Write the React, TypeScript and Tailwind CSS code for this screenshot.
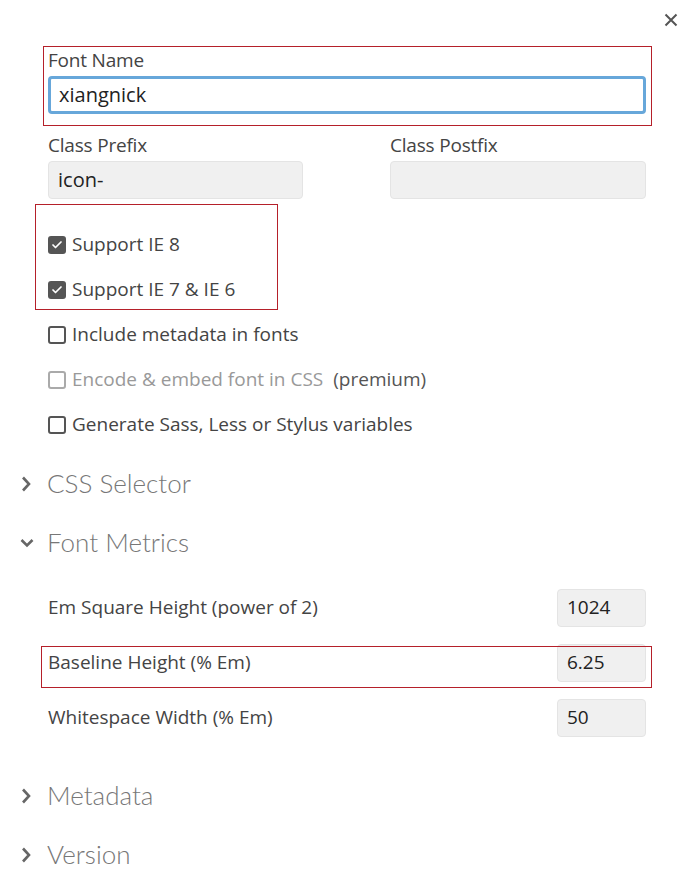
import { Check } from 'lucide-react';

const checks = [
  { label: 'Support IE 8', checked: true },
  { label: 'Support IE 7 & IE 6', checked: true },
];

const metrics = [
  { label: 'Em Square Height (power of 2)', value: '1024' },
  { label: 'Baseline Height (% Em)', value: '6.25', marked: true },
  { label: 'Whitespace Width (% Em)', value: '50' },
];

function Box({ checked, disabled }: { checked?: boolean; disabled?: boolean }) {
  if (checked) {
    return (
      <span className="w-[18px] h-[18px] rounded-[3px] bg-[#555] flex items-center justify-center shrink-0">
        <Check className="w-[12px] h-[12px] text-white" strokeWidth={3.5} />
      </span>
    );
  }
  return (
    <span
      className={
        disabled
          ? 'w-[18px] h-[18px] rounded-[3px] border-2 border-[#aaa] shrink-0'
          : 'w-[18px] h-[18px] rounded-[3px] border-2 border-[#555] shrink-0'
      }
    />
  );
}

function Section({ title, open }: { title: string; open?: boolean }) {
  return (
    <div className="h-[59px] flex items-center text-[#777] text-[26px] font-light" style={{ fontFamily: 'Lato, sans-serif' }}>
      <div className="w-[47px] flex items-center">
        {open ? (
          <svg width="14" height="10" viewBox="0 0 14 10" className="ml-[20px]">
            <path d="M1.5 2L7 7.5L12.5 2" fill="none" stroke="#666" strokeWidth="2.6" />
          </svg>
        ) : (
          <svg width="10" height="16" viewBox="0 0 10 16" className="ml-[21px]">
            <path d="M2 1.5L8 8L2 14.5" fill="none" stroke="#666" strokeWidth="2.6" />
          </svg>
        )}
      </div>
      <span>{title}</span>
    </div>
  );
}

export default function App() {
  return (
    <div
      className="w-[686px] h-[875px] bg-white relative overflow-hidden text-[#444]"
      style={{ fontFamily: '"Open Sans", "Noto Sans", sans-serif' }}
    >
      <div className="flex justify-end pt-[12px] pr-[8px] h-[48px]">
        <svg width="14" height="14" viewBox="0 0 14 14" className="mt-[1px]">
          <path d="M1.5 1.5L12.5 12.5M12.5 1.5L1.5 12.5" stroke="#555" strokeWidth="2" />
        </svg>
      </div>

      <div className="pl-[48px] pr-[40px]">
        <div className="relative">
          <div className="text-[19px] leading-[24px] tracking-[-0.2px]">Font Name</div>
          <div className="mt-[4px] h-[38px] rounded-[4px] border-[3px] border-[#67a7da] flex items-center px-[8px] text-[20px] text-[#222]">
            xiangnick
          </div>
          <div className="absolute left-[-5px] right-[-6px] top-[-2px] h-[80px] border border-[#b5202a] pointer-events-none" />
        </div>

        <div className="mt-[19px] flex justify-between">
          <div className="w-[255px]">
            <div className="text-[19px] leading-[24px] tracking-[-0.2px]">Class Prefix</div>
            <div className="mt-[4px] h-[38px] rounded-[4px] bg-[#f0f0f0] border border-[#e4e4e4] flex items-center px-[9px] text-[20px] text-[#222]">
              icon-
            </div>
          </div>
          <div className="w-[256px]">
            <div className="text-[19px] leading-[24px] tracking-[-0.2px]">Class Postfix</div>
            <div className="mt-[4px] h-[38px] rounded-[4px] bg-[#f0f0f0] border border-[#e4e4e4]" />
          </div>
        </div>

        <div className="relative mt-[23px] text-[19px]">
          {checks.map((c) => (
            <div key={c.label} className="h-[45px] flex items-center gap-[6px]">
              <Box checked={c.checked} />
              <span>{c.label}</span>
            </div>
          ))}
          <div className="h-[45px] flex items-center gap-[6px]">
            <Box />
            <span>Include metadata in fonts</span>
          </div>
          <div className="h-[45px] flex items-center gap-[6px]">
            <Box disabled />
            <span className="text-[#999]">Encode &amp; embed font in CSS</span>
            <span className="ml-[4px] text-[#555]">(premium)</span>
          </div>
          <div className="h-[45px] flex items-center gap-[6px]">
            <Box />
            <span>Generate Sass, Less or Stylus variables</span>
          </div>
          <div className="absolute left-[-13px] top-[-18px] w-[243px] h-[106px] border border-[#b5202a] pointer-events-none" />
        </div>
      </div>

      <div className="mt-[7px]">
        <Section title="CSS Selector" />
        <Section title="Font Metrics" open />
      </div>

      <div className="mt-[8px] pl-[48px] pr-[40px]">
        {metrics.map((m) => (
          <div key={m.label} className="relative h-[55px] flex items-center justify-between text-[19px]">
            <span>{m.label}</span>
            <div className="w-[89px] h-[38px] rounded-[4px] bg-[#f0f0f0] border border-[#e4e4e4] flex items-center px-[9px] text-[19px] text-[#222]">
              {m.value}
            </div>
            {m.marked && (
              <div className="absolute left-[-7px] right-[-6px] top-[11px] h-[42px] border border-[#b5202a] pointer-events-none" />
            )}
          </div>
        ))}
      </div>

      <div className="mt-[21px]">
        <Section title="Metadata" />
        <Section title="Version" />
      </div>
    </div>
  );
}
